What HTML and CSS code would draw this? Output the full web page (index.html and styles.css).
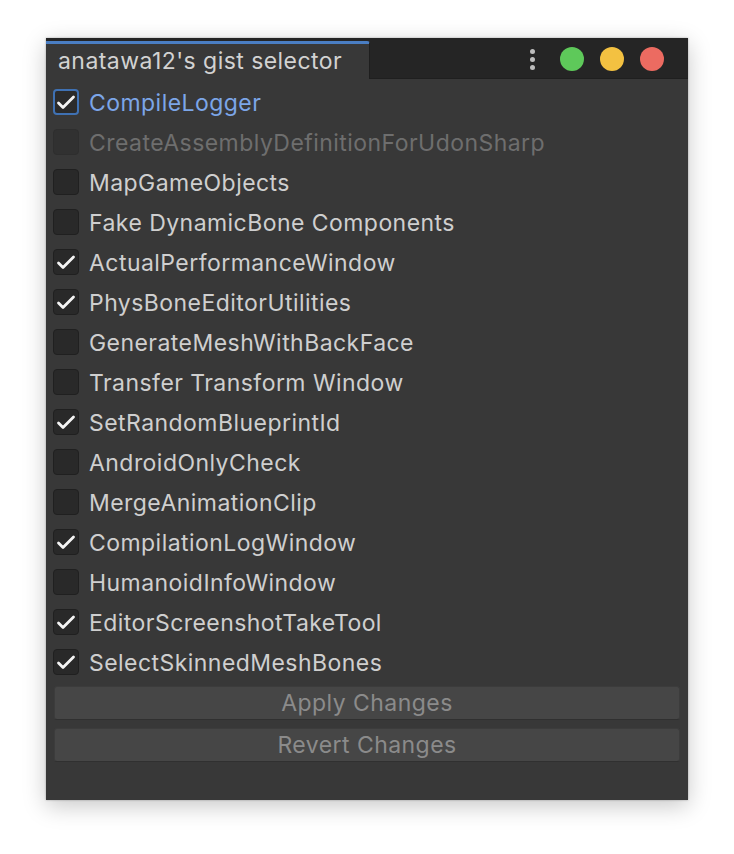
FILE: index.html
```html
<!DOCTYPE html>
<html>
<head>
<meta charset="utf-8">
<link rel="stylesheet" href="styles.css">
</head>
<body>
<div class="window">
  <div class="titlebar">
    <div class="tab">anatawa12's gist selector</div>
    <div class="controls">
      <div class="menu"><span></span><span></span><span></span></div>
      <div class="light green"></div>
      <div class="light yellow"></div>
      <div class="light red"></div>
    </div>
  </div>
  <div class="content">
    <div class="row focused"><span class="cb checked"><svg viewBox="0 0 26 26"><polyline points="5.5,14 10,18.5 20.5,8"/></svg></span><span class="label">CompileLogger</span></div>
    <div class="row disabled"><span class="cb"></span><span class="label">CreateAssemblyDefinitionForUdonSharp</span></div>
    <div class="row"><span class="cb"></span><span class="label">MapGameObjects</span></div>
    <div class="row"><span class="cb"></span><span class="label">Fake DynamicBone Components</span></div>
    <div class="row"><span class="cb checked"><svg viewBox="0 0 26 26"><polyline points="5.5,14 10,18.5 20.5,8"/></svg></span><span class="label">ActualPerformanceWindow</span></div>
    <div class="row"><span class="cb checked"><svg viewBox="0 0 26 26"><polyline points="5.5,14 10,18.5 20.5,8"/></svg></span><span class="label">PhysBoneEditorUtilities</span></div>
    <div class="row"><span class="cb"></span><span class="label">GenerateMeshWithBackFace</span></div>
    <div class="row"><span class="cb"></span><span class="label">Transfer Transform Window</span></div>
    <div class="row"><span class="cb checked"><svg viewBox="0 0 26 26"><polyline points="5.5,14 10,18.5 20.5,8"/></svg></span><span class="label">SetRandomBlueprintId</span></div>
    <div class="row"><span class="cb"></span><span class="label">AndroidOnlyCheck</span></div>
    <div class="row"><span class="cb"></span><span class="label">MergeAnimationClip</span></div>
    <div class="row"><span class="cb checked"><svg viewBox="0 0 26 26"><polyline points="5.5,14 10,18.5 20.5,8"/></svg></span><span class="label">CompilationLogWindow</span></div>
    <div class="row"><span class="cb"></span><span class="label">HumanoidInfoWindow</span></div>
    <div class="row"><span class="cb checked"><svg viewBox="0 0 26 26"><polyline points="5.5,14 10,18.5 20.5,8"/></svg></span><span class="label">EditorScreenshotTakeTool</span></div>
    <div class="row"><span class="cb checked"><svg viewBox="0 0 26 26"><polyline points="5.5,14 10,18.5 20.5,8"/></svg></span><span class="label">SelectSkinnedMeshBones</span></div>
    <div class="buttons">
      <div class="btn">Apply Changes</div>
      <div class="btn">Revert Changes</div>
    </div>
  </div>
</div>
</body>
</html>
```
FILE: styles.css
```css
html, body {
  margin: 0;
  padding: 0;
  background: #ffffff;
}
body {
  width: 734px;
  height: 854px;
  overflow: hidden;
  font-family: Inter, "Liberation Sans", sans-serif;
}
.window {
  margin: 38px 0 0 46px;
  width: 642px;
  height: 762px;
  background: #383838;
  box-shadow: 0 6px 22px rgba(0,0,0,0.22), 0 0 2px rgba(0,0,0,0.3);
  display: flex;
  flex-direction: column;
}
.titlebar {
  height: 41px;
  background: #252525;
  display: flex;
  align-items: flex-end;
  justify-content: space-between;
  border-bottom: 1px solid #1f1f1f;
  box-sizing: border-box;
}
.tab {
  width: 324px;
  height: 38px;
  box-sizing: border-box;
  background: #383838;
  border-top: 3px solid #4a7ec3;
  border-top-right-radius: 3px;
  border-right: 1px solid #1e1e1e;
  color: #d2d2d2;
  font-size: 23px;
  letter-spacing: 0.45px;
  line-height: 35px;
  padding-left: 12px;
  margin-bottom: -1px;
  white-space: nowrap;
}
.controls {
  display: flex;
  align-items: center;
  align-self: center;
  margin-top: 2px;
  padding-right: 24px;
}
.menu {
  display: flex;
  flex-direction: column;
  gap: 3px;
  margin-right: 25px;
}
.menu span {
  width: 5px;
  height: 5px;
  border-radius: 50%;
  background: #bdbdbd;
}
.light {
  width: 24px;
  height: 24px;
  border-radius: 50%;
  margin-left: 16px;
}
.green { background: #5ec95a; margin-left: 0; }
.yellow { background: #f3c141; }
.red { background: #ec6b61; }
.content {
  padding: 3px 8px 0 7px;
  display: flex;
  flex-direction: column;
}
.row {
  height: 40px;
  display: flex;
  align-items: center;
  gap: 10px;
}
.cb {
  width: 26px;
  height: 26px;
  box-sizing: border-box;
  border-radius: 4px;
  background: #292929;
  border: 1px solid #202020;
  display: flex;
  align-items: center;
  justify-content: center;
  flex: none;
}
.cb svg {
  width: 26px;
  height: 26px;
  flex: none;
}
.cb polyline {
  fill: none;
  stroke: #f4f4f4;
  stroke-width: 2.8;
  stroke-linecap: round;
  stroke-linejoin: round;
}
.label {
  color: #cfcfcf;
  font-size: 23px;
  letter-spacing: 0.45px;
  white-space: nowrap;
  padding-top: 1px;
}
.focused .cb {
  border: 2px solid #3f71b3;
  background: #2b2b2b;
}
.focused .label {
  color: #7ca6e8;
}
.disabled .cb {
  background: #313131;
  border-color: #2e2e2e;
}
.disabled .label {
  color: #6e6e6e;
}
.buttons {
  display: flex;
  flex-direction: column;
  gap: 8px;
  margin-top: 4px;
  padding-left: 1px;
}
.btn {
  height: 34px;
  box-sizing: border-box;
  background: #464646;
  border-radius: 3px;
  border: 1px solid #3c3c3c;
  border-bottom-color: #303030;
  color: #8b8b8b;
  font-size: 23px;
  letter-spacing: 0.45px;
  line-height: 33px;
  text-align: center;
}
```
